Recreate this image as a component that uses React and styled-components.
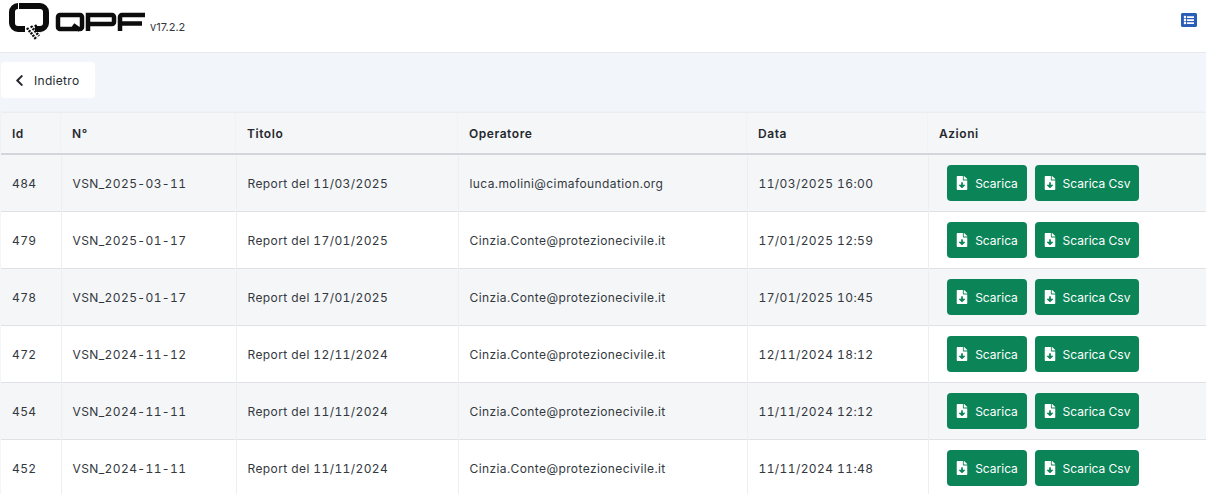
import React from "react";
import styled, { createGlobalStyle } from "styled-components";
import { FaListAlt, FaFileDownload, FaChevronLeft } from "react-icons/fa";

const GlobalStyle = createGlobalStyle`
  html, body {
    margin: 0;
    padding: 0;
    background: #f2f5fa;
    font-family: Inter, "Noto Sans", sans-serif;
    overflow: hidden;
  }
`;

const Header = styled.header`
  height: 53px;
  box-sizing: border-box;
  background: #fff;
  border-bottom: 1px solid #e6e8ec;
  display: flex;
  align-items: flex-start;
  justify-content: space-between;
  padding: 0 9px 0 8px;
`;

const Brand = styled.div`
  display: flex;
  align-items: flex-start;
`;

const Version = styled.span`
  font-size: 11px;
  color: #33383e;
  margin: 20px 0 0 3px;
`;

const ListButton = styled.span`
  color: #2a5db8;
  font-size: 16px;
  margin-top: 12px;
  display: flex;
`;

const Toolbar = styled.div`
  height: 60px;
  padding: 9px 0 0 1px;
  box-sizing: border-box;
`;

const BackButton = styled.button`
  width: 94px;
  height: 36px;
  border: 0;
  border-radius: 4px;
  background: #fff;
  color: #25292e;
  font: inherit;
  font-size: 12px;
  letter-spacing: 0.3px;
  display: flex;
  align-items: center;
  gap: 8px;
  padding: 0 0 0 12px;
`;

const Table = styled.table`
  width: 1205px;
  margin-left: 1px;
  border-collapse: collapse;
  table-layout: fixed;
  font-size: 12px;
  letter-spacing: 0.4px;
  font-variant-numeric: tabular-nums;
  color: #33383e;
`;

const HeadCell = styled.th`
  height: 40px;
  padding: 0 0 0 11px;
  text-align: left;
  font-weight: 600;
  letter-spacing: 0.55px;
  background: #f5f6f8;
  color: #25292e;
  border-bottom: 2px solid #d3d5da;
  box-shadow: 0 -1px 2px rgba(0, 0, 0, 0.05);
`;

const Row = styled.tr`
  height: 57px;
  background: ${(p) => (p.$odd ? "#f5f6f8" : "#fff")};
  border-bottom: 1px solid #dfe1e5;
`;

const Cell = styled.td`
  padding: 1px 0 0 11px;
  border-left: 1px solid #eceef1;
  &:first-child {
    border-left: 0;
  }
`;

const Actions = styled.div`
  display: flex;
  gap: 8px;
  padding-left: 7px;
  margin-top: -1px;
`;

const GreenButton = styled.button`
  height: 36px;
  width: ${(p) => p.$w}px;
  border: 0;
  border-radius: 4px;
  background: #0b8457;
  color: #fff;
  font: inherit;
  font-size: 12px;
  display: flex;
  align-items: center;
  justify-content: center;
  gap: 6px;
  padding: 1px 0 0;
`;

const rows = [
  ["484", "VSN_2025-03-11", "Report del 11/03/2025", "luca.molini@cimafoundation.org", "11/03/2025 16:00"],
  ["479", "VSN_2025-01-17", "Report del 17/01/2025", "Cinzia.Conte@protezionecivile.it", "17/01/2025 12:59"],
  ["478", "VSN_2025-01-17", "Report del 17/01/2025", "Cinzia.Conte@protezionecivile.it", "17/01/2025 10:45"],
  ["472", "VSN_2024-11-12", "Report del 12/11/2024", "Cinzia.Conte@protezionecivile.it", "12/11/2024 18:12"],
  ["454", "VSN_2024-11-11", "Report del 11/11/2024", "Cinzia.Conte@protezionecivile.it", "11/11/2024 12:12"],
  ["452", "VSN_2024-11-11", "Report del 11/11/2024", "Cinzia.Conte@protezionecivile.it", "11/11/2024 11:48"],
];

const widths = [60, 175, 222, 289, 181, 278];

function Logo() {
  return (
    <svg width="139" height="42" viewBox="0 0 139 42">
      <path d="M9 6h21a6 6 0 0 1 6 6v11a6 6 0 0 1-6 6h-5M15 29H8a6 6 0 0 1-6-6V12a6 6 0 0 1 6-6" transform="translate(2 0)" fill="none" stroke="#0c0c0c" strokeWidth="6" />
      <path d="M19 28l9 11M23 26l8 10M27 25l6 7" stroke="#0c0c0c" strokeWidth="2.6" strokeDasharray="2 1" />
      <path d="M52 15h20a2 2 0 0 1 2 2v10a2 2 0 0 1-2 2H52a2 2 0 0 1-2-2V17a2 2 0 0 1 2-2zM65 25l7 5" fill="none" stroke="#0c0c0c" strokeWidth="4.5" />
      <path d="M80 31V15h24a2 2 0 0 1 2 2v5a2 2 0 0 1-2 2H80" fill="none" stroke="#0c0c0c" strokeWidth="4.5" />
      <path d="M112 31V17a2 2 0 0 1 2-2h23M112 23.5h22" fill="none" stroke="#0c0c0c" strokeWidth="4.5" />
    </svg>
  );
}

export default function App() {
  return (
    <>
      <GlobalStyle />
      <Header>
        <Brand>
          <Logo />
          <Version>v17.2.2</Version>
        </Brand>
        <ListButton>
          <FaListAlt />
        </ListButton>
      </Header>
      <Toolbar>
        <BackButton>
          <FaChevronLeft size={13} />
          Indietro
        </BackButton>
      </Toolbar>
      <Table>
        <colgroup>
          {widths.map((w, i) => (
            <col key={i} style={{ width: w }} />
          ))}
        </colgroup>
        <thead>
          <tr>
            {["Id", "N°", "Titolo", "Operatore", "Data", "Azioni"].map((h) => (
              <HeadCell key={h}>{h}</HeadCell>
            ))}
          </tr>
        </thead>
        <tbody>
          {rows.map((r, i) => (
            <Row key={r[0]} $odd={i % 2 === 0}>
              {r.map((c, j) => (
                <Cell key={j}>{c}</Cell>
              ))}
              <Cell>
                <Actions>
                  <GreenButton $w={80}>
                    <FaFileDownload size={14} />
                    Scarica
                  </GreenButton>
                  <GreenButton $w={104}>
                    <FaFileDownload size={14} />
                    Scarica Csv
                  </GreenButton>
                </Actions>
              </Cell>
            </Row>
          ))}
        </tbody>
      </Table>
    </>
  );
}
